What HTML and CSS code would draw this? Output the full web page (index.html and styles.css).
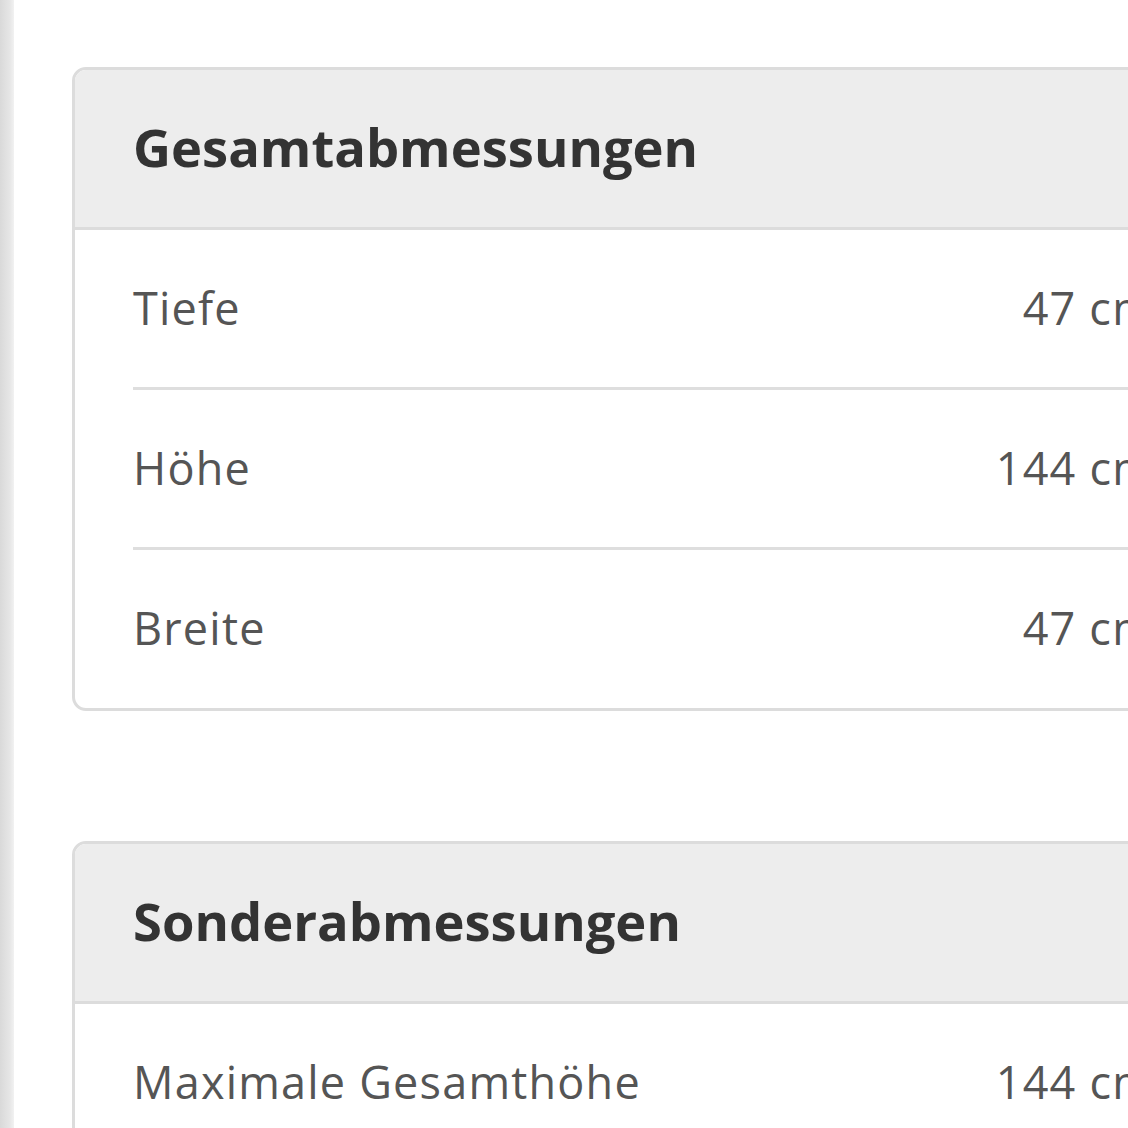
FILE: index.html
```html
<!DOCTYPE html>
<html lang="de">
<head>
<meta charset="utf-8">
<link rel="stylesheet" href="styles.css">
</head>
<body>
<div class="page">
  <div class="edge"></div>
  <main class="content">
    <section class="card">
      <h2 class="card-title">Gesamtabmessungen</h2>
      <div class="row"><span class="label">Tiefe</span><span class="value">47 cm</span></div>
      <div class="row"><span class="label">Höhe</span><span class="value">144 cm</span></div>
      <div class="row"><span class="label">Breite</span><span class="value">47 cm</span></div>
    </section>
    <section class="card">
      <h2 class="card-title">Sonderabmessungen</h2>
      <div class="row"><span class="label">Maximale Gesamthöhe</span><span class="value">144 cm</span></div>
      <div class="row"><span class="label">Minimale Gesamthöhe</span><span class="value">144 cm</span></div>
    </section>
  </main>
</div>
</body>
</html>
```
FILE: styles.css
```css
html, body {
  margin: 0;
  padding: 0;
  background: #fff;
  overflow: hidden;
  height: 1128px;
}
.page {
  display: flex;
  width: 1300px;
  font-family: "Open Sans", "Lato", sans-serif;
}
.edge {
  width: 14px;
  flex-shrink: 0;
  height: 1128px;
  background: linear-gradient(to right, #d9d9d9, #e6e6e6 70%, #f2f2f2);
}
.content {
  padding: 67px 0 0 58px;
  display: flex;
  flex-direction: column;
  gap: 130px;
}
.card {
  width: 1140px;
  border: 3px solid #dcdcdc;
  border-radius: 14px;
  overflow: hidden;
}
.card-title {
  margin: 0;
  height: 160px;
  box-sizing: border-box;
  display: flex;
  align-items: center;
  padding: 0 0 4px 58px;
  background: #ededed;
  border-bottom: 3px solid #dcdcdc;
  font-size: 52.5px;
  font-weight: 700;
  color: #333;
}
.row {
  margin-left: 58px;
  padding: 0 60px 3px 0;
  height: 160px;
  box-sizing: border-box;
  display: flex;
  align-items: center;
  justify-content: space-between;
  border-bottom: 3px solid #dedede;
  font-size: 45px;
  letter-spacing: 1.2px;
  color: #555;
}
.row:last-child {
  border-bottom: none;
  height: 158px;
}
```
